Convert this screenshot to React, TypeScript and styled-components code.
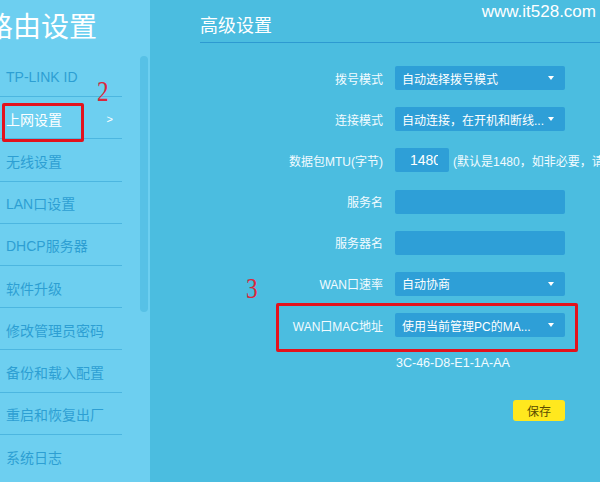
import React from 'react';
import styled, { createGlobalStyle } from 'styled-components';

const GlobalStyle = createGlobalStyle`
  html, body {
    margin: 0;
    padding: 0;
    overflow: hidden;
  }
  body {
    font-family: "Liberation Sans", "Noto Sans CJK SC", sans-serif;
  }
`;

const Page = styled.div`
  display: flex;
  width: 600px;
  height: 482px;
  overflow: hidden;
`;

const Sidebar = styled.div`
  position: relative;
  width: 150px;
  flex-shrink: 0;
  background: #6dcff0;
  display: flex;
  flex-direction: column;
`;

const SideTitle = styled.div`
  height: 55px;
  box-sizing: border-box;
  padding-top: 12px;
  margin-left: -15px;
  font-size: 28px;
  line-height: 32px;
  color: #ffffff;
  white-space: nowrap;
`;

const SideBody = styled.div`
  display: flex;
`;

const Menu = styled.div`
  width: 140px;
  display: flex;
  flex-direction: column;
`;

const MenuItem = styled.div<{ $active?: boolean }>`
  width: 122px;
  height: 42.2px;
  box-sizing: border-box;
  display: flex;
  align-items: center;
  justify-content: space-between;
  padding: 2px 9px 0 6px;
  border-bottom: 1px solid #4cb6e0;
  font-size: 14px;
  color: ${(p) => (p.$active ? '#ffffff' : '#2d9fd3')};
  white-space: nowrap;

  &:last-child {
    border-bottom: none;
  }
`;

const Chevron = styled.span`
  font-size: 11px;
  color: #ffffff;
`;

const ScrollThumb = styled.div`
  width: 8px;
  height: 256px;
  margin-top: 1px;
  border-radius: 4px;
  background: #57c1e6;
`;

const Main = styled.div`
  position: relative;
  width: 450px;
  min-width: 0;
  box-sizing: border-box;
  overflow: hidden;
  background: #4bbde0;
  padding-left: 50px;
`;

const Watermark = styled.div`
  position: absolute;
  top: 2px;
  right: 4px;
  font-size: 17px;
  color: #ffffff;
`;

const Header = styled.div`
  height: 43px;
  box-sizing: border-box;
  padding-top: 15px;
  border-bottom: 1px solid #2d9ad1;
  font-size: 18px;
  line-height: 22px;
  color: #ffffff;
`;

const Form = styled.div`
  display: flex;
  flex-direction: column;
  gap: 17.2px;
  margin-top: 23px;
`;

const Row = styled.div`
  display: flex;
  align-items: center;
  gap: 12px;
  height: 24px;
`;

const Label = styled.div`
  width: 183px;
  flex-shrink: 0;
  text-align: right;
  font-size: 12px;
  color: #f2fbff;
  white-space: nowrap;
`;

const Field = styled.div<{ $width?: number }>`
  width: ${(p) => p.$width ?? 170}px;
  height: 24px;
  box-sizing: border-box;
  display: flex;
  align-items: center;
  padding: 0 11px 0 7px;
  border-radius: 2px;
  background: #2e9fd7;
  color: #ffffff;
  font-size: 12px;
  flex-shrink: 0;
`;

const FieldText = styled.span`
  flex: 1;
  white-space: nowrap;
  overflow: hidden;
`;

const Caret = styled.span`
  width: 0;
  height: 0;
  border-left: 3px solid transparent;
  border-right: 3px solid transparent;
  border-top: 4px solid #ffffff;
`;

const NumberInput = styled.span`
  display: block;
  width: 29px;
  margin-left: 8px;
  overflow: hidden;
  white-space: nowrap;
  font-size: 14px;
`;

const Hint = styled.span`
  font-size: 12px;
  color: #f2fbff;
  white-space: nowrap;
  margin-left: -8px;
`;

const MacNote = styled.div`
  margin-top: 19px;
  padding-left: 196px;
  font-size: 12.5px;
  line-height: 14px;
  color: #f2fbff;
`;

const Actions = styled.div`
  width: 365px;
  display: flex;
  justify-content: flex-end;
  margin-top: 30px;
`;

const SaveButton = styled.button`
  width: 52px;
  height: 21px;
  padding: 0;
  border: none;
  border-radius: 3px;
  background: #ffe81e;
  color: #5a4c00;
  font-family: inherit;
  font-size: 12px;
`;

const MarkBox = styled.div<{ $x: number; $y: number; $w: number; $h: number }>`
  position: absolute;
  left: ${(p) => p.$x}px;
  top: ${(p) => p.$y}px;
  width: ${(p) => p.$w}px;
  height: ${(p) => p.$h}px;
  box-sizing: border-box;
  border: 3px solid #e3121c;
  border-radius: 2px;
  pointer-events: none;
`;

const MarkNumber = styled.div<{ $x: number; $y: number }>`
  position: absolute;
  left: ${(p) => p.$x}px;
  top: ${(p) => p.$y}px;
  font-family: "Liberation Serif", serif;
  font-size: 29px;
  line-height: 29px;
  color: #d9283c;
  transform: scaleX(0.8);
  transform-origin: left top;
`;

const menu = [
  'TP-LINK ID',
  '上网设置',
  '无线设置',
  'LAN口设置',
  'DHCP服务器',
  '软件升级',
  '修改管理员密码',
  '备份和载入配置',
  '重启和恢复出厂',
  '系统日志',
];

const Select: React.FC<{ text: string }> = ({ text }) => (
  <Field>
    <FieldText>{text}</FieldText>
    <Caret />
  </Field>
);

export default function App() {
  return (
    <Page>
      <GlobalStyle />
      <Sidebar>
        <SideTitle>路由设置</SideTitle>
        <SideBody>
          <Menu>
            {menu.map((item) => (
              <MenuItem key={item} $active={item === '上网设置'}>
                <span>{item}</span>
                {item === '上网设置' && <Chevron>&gt;</Chevron>}
              </MenuItem>
            ))}
          </Menu>
          <ScrollThumb />
        </SideBody>
        <MarkBox $x={2} $y={103} $w={82} $h={39} />
        <MarkNumber $x={97} $y={77}>2</MarkNumber>
      </Sidebar>
      <Main>
        <Watermark>www.it528.com</Watermark>
        <Header>高级设置</Header>
        <Form>
          <Row>
            <Label>拨号模式</Label>
            <Select text="自动选择拨号模式" />
          </Row>
          <Row>
            <Label>连接模式</Label>
            <Select text="自动连接，在开机和断线..." />
          </Row>
          <Row>
            <Label>数据包MTU(字节)</Label>
            <Field $width={54}>
              <NumberInput>1480</NumberInput>
            </Field>
            <Hint>(默认是1480，如非必要，请勿修改)</Hint>
          </Row>
          <Row>
            <Label>服务名</Label>
            <Field />
          </Row>
          <Row>
            <Label>服务器名</Label>
            <Field />
          </Row>
          <Row>
            <Label>WAN口速率</Label>
            <Select text="自动协商" />
          </Row>
          <Row>
            <Label>WAN口MAC地址</Label>
            <Select text="使用当前管理PC的MA..." />
          </Row>
        </Form>
        <MacNote>3C-46-D8-E1-1A-AA</MacNote>
        <Actions>
          <SaveButton>保存</SaveButton>
        </Actions>
        <MarkBox $x={126} $y={303} $w={302} $h={49} />
        <MarkNumber $x={96} $y={274}>3</MarkNumber>
      </Main>
    </Page>
  );
}
